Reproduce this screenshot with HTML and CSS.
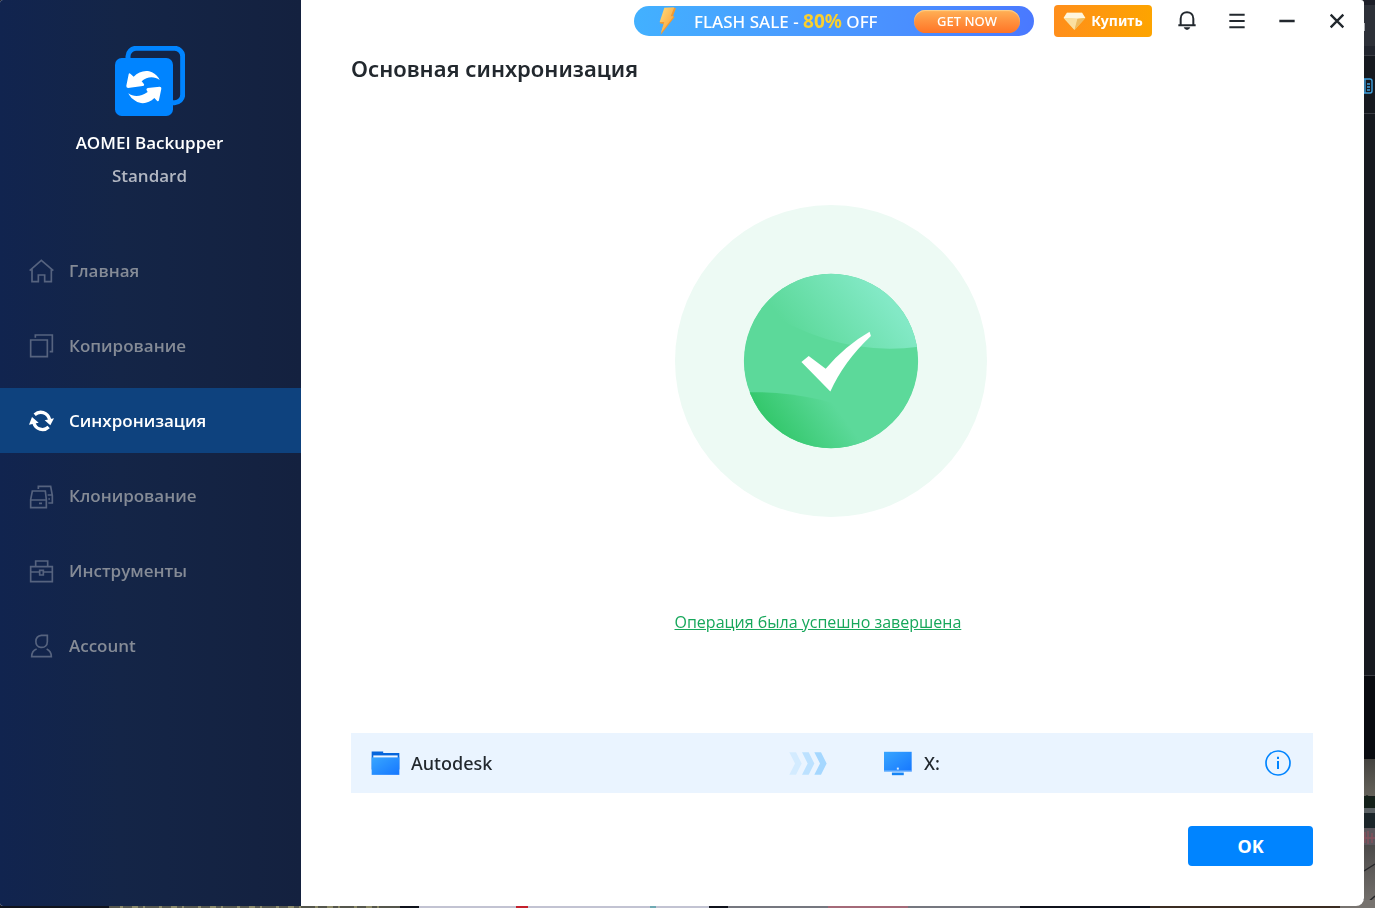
FILE: index.html
```html
<!DOCTYPE html>
<html lang="ru">
<head>
<meta charset="utf-8">
<title>AOMEI Backupper Standard</title>
<meta name="viewport" content="width=device-width, initial-scale=1">
<link rel="stylesheet" href="styles.css">
</head>
<body>
<div class="desktop" aria-hidden="true">
  <svg class="desktop-side" viewBox="0 0 11 908" preserveAspectRatio="none">
    <defs>
      <linearGradient id="road" x1="0" y1="0" x2="0" y2="1"><stop offset="0" stop-color="#4c4a49"/><stop offset="1" stop-color="#77736f"/></linearGradient>
      <linearGradient id="wall" x1="0" y1="0" x2="0" y2="1"><stop offset="0" stop-color="#44433f"/><stop offset="1" stop-color="#65625a"/></linearGradient>
    </defs>
    <rect width="11" height="908" fill="#16191f"/>
    <rect width="11" height="5" fill="#1d1f28"/>
    <rect y="5" width="11" height="41" fill="#2d3038"/>
    <rect y="46" width="11" height="9" fill="#22252e"/>
    <rect y="55" width="11" height="1" fill="#3a3c43"/>
    <rect y="113" width="11" height="1" fill="#3a3c43"/>
    <rect y="23" width="1" height="8" fill="#a9abb0"/>
    <path d="M0 79h6q2 0 2 2v10q0 2-2 2H0M1 79v14M3 84h3M3 87h3M3 90h3" fill="none" stroke="#3f9fdc" stroke-width="1.4"/>
    <rect y="675" width="11" height="84" fill="#090b10"/>
    <rect y="675" width="11" height="1" fill="#3a3c43"/>
    <rect y="759" width="11" height="37" fill="url(#wall)"/>
    <path d="M0 797l3-2 3 2 5-1v12H0z" fill="#142019"/>
    <path d="M0 808h11v5H0z" fill="#5b6164"/>
    <path d="M0 813h11v15H0z" fill="#1b2529"/>
    <path d="M0 828h11v17H0z" fill="#5c565c"/>
    <path d="M1 832v11M4 831v13M8 833v10M0 838h11" stroke="#87525d" stroke-width="1.4"/>
    <path d="M0 845h11v63H0z" fill="url(#road)"/>
    <path d="M0 871l11-7M3 903l8-7" stroke="#252629" stroke-width="1.4"/>
  </svg>
  <svg class="desktop-bottom" viewBox="0 0 1375 8" preserveAspectRatio="none">
    <rect width="1375" height="8" fill="#10131c"/>
    <path d="M109 0h291v8H109z" fill="#55564c"/>
    <path d="M120 4h270" stroke="#8b8968" stroke-width="8" stroke-dasharray="3 9 6 5 2 14"/>
    <path d="M419 0h290v8H419z" fill="#c2c3d2"/>
    <path d="M516 0h12v8h-12z" fill="#c3202c"/>
    <path d="M650 0h6v8h-6z" fill="#6fa9b3"/>
    <path d="M728 0h292v8H728z" fill="#75777f"/>
    <path d="M828 0h80v8h-80z" fill="#a46a78"/>
    <path d="M1150 0h190v8h-190z" fill="#3b2c22"/>
    <path d="M1340 0h35v8h-35z" fill="#77736f"/>
  </svg>
</div>

<div class="window">
  <aside class="sidebar">
    <div class="brand">
      <svg class="brand-logo" viewBox="165 48 210 210" aria-hidden="true">
        <rect x="204" y="55" width="164" height="163" rx="24" fill="none" stroke="#0084ff" stroke-width="15"/>
        <rect x="158" y="84" width="181" height="181" rx="25" fill="#14244a"/>
        <rect x="165" y="84" width="174" height="174" rx="20" fill="#0084ff"/>
        <path d="M204 174q-6-1-5-7l7-34q1-5 5-2l10 9c15-16 38-22 55-13q16 8 23 23c-16-12-38-11-54 4l6 7q4 5-3 7zM299 170q6 0 5 6l-7 34q-2 6-6 2l-8-8c-16 17-40 20-56 9q-16-9-22-23c16 12 37 11 58-4l-3-5q-3-5 3-7z" fill="#fff"/>
      </svg>
      <div class="brand-name">AOMEI Backupper</div>
      <div class="brand-edition">Standard</div>
    </div>
    <nav class="nav" aria-label="AOMEI Backupper">
      <a class="nav-item" href="#home">
        <svg class="nav-icon" viewBox="84 53 78 78" aria-hidden="true"><path d="M89 91l35-31 36 31M96 86v38h19v-20h19v20h20V86"/></svg>
        <span>Главная</span>
      </a>
      <a class="nav-item" href="#backup">
        <svg class="nav-icon" viewBox="84 278 78 78" aria-hidden="true"><path d="M92 299h50v50H92zM106 292v-8h51v50h-8"/></svg>
        <span>Копирование</span>
      </a>
      <a class="nav-item nav-item-active" href="#sync" aria-current="page">
        <svg class="nav-icon" viewBox="84 503 78 78" aria-hidden="true"><path class="nav-arc" d="M104 523c15-13 39-8 45 15M146 560c-15 14-39 8-45-14"/><path class="nav-head" d="M134 540l28-6-11 21zM87 553l9-23 20 17z"/></svg>
        <span>Синхронизация</span>
      </a>
      <a class="nav-item" href="#clone">
        <svg class="nav-icon" viewBox="84 68 78 78" aria-hidden="true"><path d="M97 92h39l3 26v24H92v-24zM92 119h47M117 129h9M115 86v-8h37l5 28v22h-12M143 104h14M145 116h5"/></svg>
        <span>Клонирование</span>
      </a>
      <a class="nav-item" href="#tools">
        <svg class="nav-icon" viewBox="84 293 78 78" aria-hidden="true"><path d="M92 319h65v45H92zM107 319v-17h36v17M92 335h26M131 335h26M119 330h11v14h-11z"/></svg>
        <span>Инструменты</span>
      </a>
      <a class="nav-item" href="#account">
        <svg class="nav-icon" viewBox="84 518 78 78" aria-hidden="true"><path d="M142 525h-18c-21 2-22 34-2 36 13 2 20-7 20-17zM110 566c-11 4-15 13-15 23h59c0-10-5-19-14-23"/></svg>
        <span>Account</span>
      </a>
    </nav>
  </aside>

  <div class="main">
    <header class="topbar">
      <a class="promo" href="#sale">
        <svg class="promo-bolt" viewBox="102 18 60 90" aria-hidden="true">
          <defs><linearGradient id="bolt" x1="0" y1="0" x2="1" y2="1"><stop offset="0" stop-color="#ffdc7d"/><stop offset="1" stop-color="#f99a30"/></linearGradient></defs>
          <path d="M124 25l32-1-9 25 5 2-42 54 9-33-12-2z" fill="#f29a31"/>
          <path d="M121 23l30-1-11 27h9l-39 51 11-34h-14z" fill="url(#bolt)"/>
        </svg>
        <span class="promo-text">FLASH SALE - <b>80%</b> OFF</span>
        <span class="promo-cta">GET NOW</span>
      </a>
      <button class="buy" type="button">
        <svg class="buy-gem" viewBox="70 31 70 57" aria-hidden="true">
          <path d="M82 33h46l10 16-33 36-33-36z" fill="#f6cf7a"/>
          <path d="M82 33h46l10 16-24 2-42-2z" fill="#fff6df"/>
          <path d="M72 49l42 2-9 34z" fill="#fbdf9f"/>
          <path d="M114 51l24-2-33 36z" fill="#eebb5f"/>
        </svg>
        <span>Купить</span>
      </button>
      <button class="tool" type="button" aria-label="Уведомления">
        <svg viewBox="396 18 90 90" aria-hidden="true"><path d="M415 76h52M422 76V56c0-26 38-26 38 0v20" fill="none" stroke="#22282e" stroke-width="6"/><path d="M431 82h20q-3 8-10 8t-10-8z" fill="#22282e"/></svg>
      </button>
      <button class="tool" type="button" aria-label="Меню">
        <svg viewBox="546 18 90 90" aria-hidden="true"><path d="M568 44h46M568 63h46M568 82h46" stroke="#22282e" stroke-width="6"/></svg>
      </button>
      <button class="tool" type="button" aria-label="Свернуть">
        <svg viewBox="696 18 90 90" aria-hidden="true"><path d="M718 63h46" stroke="#22282e" stroke-width="7"/></svg>
      </button>
      <button class="tool" type="button" aria-label="Закрыть">
        <svg viewBox="846 18 90 90" aria-hidden="true"><path d="M872 44l38 38M910 44l-38 38" stroke="#22282e" stroke-width="7"/></svg>
      </button>
    </header>

    <main class="content">
      <h1 class="title">Основная синхронизация</h1>
      <section class="result">
        <div class="result-box">
          <svg class="result-image" viewBox="42 30 938 938" aria-hidden="true">
            <defs>
              <linearGradient id="mint" gradientUnits="userSpaceOnUse" x1="400" y1="420" x2="620" y2="240"><stop offset="0" stop-color="#5cd99a"/><stop offset="1" stop-color="#83e9c6"/></linearGradient>
              <linearGradient id="leaf" gradientUnits="userSpaceOnUse" x1="370" y1="740" x2="520" y2="630"><stop offset="0" stop-color="#35c86d"/><stop offset="1" stop-color="#5cd99a"/></linearGradient>
              <clipPath id="disc"><circle cx="511" cy="499" r="262"/></clipPath>
            </defs>
            <circle cx="511" cy="499" r="469" fill="#edfaf4"/>
            <g clip-path="url(#disc)">
              <circle cx="511" cy="499" r="263" fill="#5cd99a"/>
              <path d="M290 335Q530 490 775 456V230H290z" fill="url(#mint)"/>
              <path d="M240 594C380 586 520 618 630 665V770H240z" fill="url(#leaf)"/>
            </g>
            <path d="M422 502l22-18 51 38q60-70 132-111l4 13Q550 500 509 591z" fill="#fff"/>
          </svg>
          <a class="result-link" href="#log">Операция была успешно завершена</a>
        </div>
      </section>
      <section class="task">
        <div class="endpoint">
          <svg class="endpoint-icon" viewBox="94 74 88 78" aria-hidden="true">
            <defs><linearGradient id="blue" x1="0" y1="0" x2="1" y2="1"><stop offset="0" stop-color="#38a6ff"/><stop offset="1" stop-color="#1677ff"/></linearGradient></defs>
            <path d="M96 78h35v5h49v50H96z" fill="#0565dc"/>
            <path d="M101 90h74v12h-74z" fill="#eef5ff"/>
            <path d="M96 96h84v53H96z" fill="url(#blue)"/>
          </svg>
          <span>Autodesk</span>
        </div>
        <svg class="task-arrows" viewBox="57 50 114 68" aria-hidden="true">
          <path d="M58 50h20l17 34-17 34H58l17-34z" fill="#d3ebff"/>
          <path d="M96 50h20l17 34-17 34H96l17-34z" fill="#bce1ff"/>
          <path d="M133 50h20l17 34-17 34h-20l17-34z" fill="#a5d7ff"/>
        </svg>
        <div class="endpoint">
          <svg class="endpoint-icon" viewBox="342 46 88 78" aria-hidden="true">
            <path d="M342 51h84v60h-84z" fill="url(#blue)"/>
            <path d="M342 108h84v3h-84z" fill="#8cc5ff"/>
            <path d="M366 114h36v8h-36z" fill="#1684f5"/>
            <path d="M381 99h6v6h-6z" fill="#d8ecff"/>
          </svg>
          <span>X:</span>
        </div>
        <button class="info" type="button" aria-label="Информация">
          <svg viewBox="285 45 78 78" aria-hidden="true"><circle cx="324" cy="84" r="36" fill="none" stroke="#0084ff" stroke-width="5"/><path d="M324 78v24M324 65v7" stroke="#0084ff" stroke-width="6"/></svg>
        </button>
      </section>
      <footer class="actions">
        <button class="ok" type="button">OK</button>
      </footer>
    </main>
  </div>
</div>
</body>
</html>
```
FILE: styles.css
```css
* {
  box-sizing: border-box;
}

body {
  margin: 0;
  height: 100vh;
  padding: 0 11px 2px 0;
  background: #10131c;
  color: #22282e;
  font-family: "Noto Sans", "Open Sans", sans-serif;
  font-size: 18px;
  line-height: 24px;
}

button {
  padding: 0;
  border: 0;
  background: none;
  color: inherit;
  font: inherit;
  cursor: pointer;
}

a {
  color: inherit;
  text-decoration: none;
}

svg {
  display: block;
  flex: none;
}

.desktop {
  position: fixed;
  inset: 0;
}

.desktop-side {
  position: absolute;
  top: 0;
  right: 0;
  width: 11px;
  height: 100%;
}

.desktop-bottom {
  position: absolute;
  bottom: 0;
  left: 0;
  width: 100%;
  height: 8px;
}

.window {
  position: relative;
  display: flex;
  height: 100%;
  overflow: hidden;
  border-radius: 3px 3px 8px 3px;
  background: #fff;
}

.sidebar {
  flex: none;
  width: 301px;
  padding-top: 46px;
  background: linear-gradient(90deg, #11244f, #142547 40%, #14213f);
  font-family: "Open Sans", "Noto Sans", sans-serif;
  font-size: 17px;
  font-weight: 600;
}

.brand {
  display: flex;
  flex-direction: column;
  align-items: center;
  padding-right: 2px;
  color: #fff;
}

.brand-logo {
  width: 70px;
  height: 70px;
  margin-bottom: 15px;
}

.brand-edition {
  margin-top: 9px;
  color: #b2b7c2;
}

.nav {
  display: flex;
  flex-direction: column;
  gap: 10px;
  margin-top: 50px;
}

.nav-item {
  display: flex;
  align-items: center;
  gap: 15px;
  height: 65px;
  padding-left: 28px;
  color: #858b96;
}

.nav-item-active {
  background: #0e427e;
  color: #fff;
}

.nav-icon {
  width: 26px;
  height: 26px;
  fill: none;
  stroke: #56637f;
  stroke-width: 5;
}

.nav-arc {
  stroke: #fff;
  stroke-width: 10;
}

.nav-head {
  fill: #fff;
  stroke: none;
}

.main {
  display: flex;
  flex: 1;
  flex-direction: column;
  min-width: 0;
}

.topbar {
  display: flex;
  align-items: center;
  justify-content: flex-end;
  gap: 20px;
  height: 42px;
  padding-right: 12px;
}

.promo {
  display: flex;
  align-items: center;
  width: 400px;
  height: 30px;
  padding: 0 14px 0 24px;
  border-radius: 15px;
  background: linear-gradient(100deg, #42b1ff, #4a9cff 40%, #4a8eff 70%, #4a78ff);
  color: #fff;
}

.promo-bolt {
  width: 20px;
  height: 30px;
  margin-right: 16px;
}

.promo-text {
  flex: 1;
  font-size: 17px;
  font-weight: 500;
  white-space: nowrap;
}

.promo-text b {
  color: #fbd02d;
  font-size: 19px;
}

.promo-cta {
  width: 106px;
  height: 23px;
  border-radius: 12px;
  background: linear-gradient(#ffb257, #ff9440 45%, #ff7426);
  box-shadow: inset 0 1px 1px #ffd08a;
  font-size: 13px;
  font-weight: 500;
  line-height: 23px;
  text-align: center;
}

.buy {
  display: flex;
  align-items: center;
  justify-content: center;
  gap: 5px;
  width: 98px;
  height: 32px;
  border-radius: 4px;
  background: linear-gradient(90deg, #ff8e1b, #fda400);
  color: #fff;
  font-size: 14px;
  font-weight: 700;
}

.buy-gem {
  width: 23px;
  height: 19px;
}

.tool,
.tool svg {
  width: 30px;
  height: 30px;
}

.content {
  display: flex;
  flex: 1;
  flex-direction: column;
  padding: 12px 51px 40px 50px;
}

.title {
  margin: 0;
  font-size: 22px;
  font-weight: 600;
  line-height: 28px;
}

.result {
  display: flex;
  flex: 1;
  align-items: center;
  justify-content: center;
  padding: 24px 3px 0 0;
}

.result-image {
  width: 312px;
  height: 312px;
  margin-bottom: 92px;
}

.result-link {
  color: #17a75b;
  font-family: "Open Sans", "Noto Sans", sans-serif;
  font-size: 16px;
  text-decoration: underline;
  white-space: nowrap;
}

.task {
  display: grid;
  grid-template-columns: 418fr 95fr 381fr 26px;
  align-items: center;
  height: 60px;
  padding: 0 22px 0 20px;
  background: #eaf4ff;
}

.endpoint {
  display: flex;
  align-items: center;
  gap: 11px;
  font-weight: 500;
}

.endpoint-icon {
  width: 29px;
  height: 26px;
}

.task-arrows {
  width: 38px;
  height: 23px;
}

.info,
.info svg {
  width: 26px;
  height: 26px;
}

.actions {
  display: flex;
  justify-content: flex-end;
  margin-top: 33px;
}

.ok {
  width: 125px;
  height: 40px;
  border-radius: 4px;
  background: #0084ff;
  color: #fff;
  font-weight: 700;
}
```
